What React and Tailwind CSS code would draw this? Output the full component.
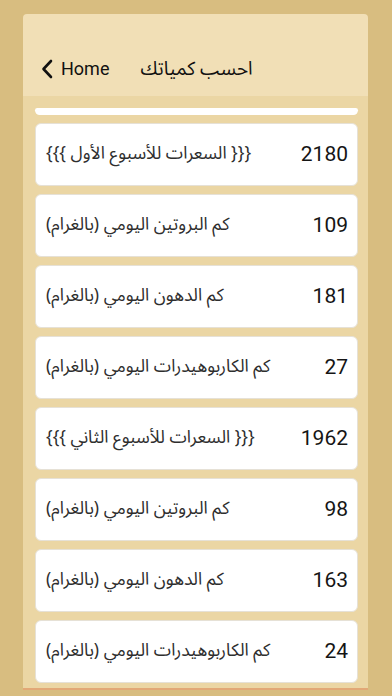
import React from 'react';

const rows = [
	{ value: '2180', label: '{{{ السعرات للأسبوع الأول }}}' },
	{ value: '109', label: 'كم البروتين اليومي (بالغرام)' },
	{ value: '181', label: 'كم الدهون اليومي (بالغرام)' },
	{ value: '27', label: 'كم الكاربوهيدرات اليومي (بالغرام)' },
	{ value: '1962', label: '{{{ السعرات للأسبوع الثاني }}}' },
	{ value: '98', label: 'كم البروتين اليومي (بالغرام)' },
	{ value: '163', label: 'كم الدهون اليومي (بالغرام)' },
	{ value: '24', label: 'كم الكاربوهيدرات اليومي (بالغرام)' },
];

const arabic = { fontFamily: '"Noto Sans Arabic", "DejaVu Sans", sans-serif' };
const latin = { fontFamily: 'Roboto, "Liberation Sans", sans-serif' };

export default function App() {
	return (
		<div className="w-[392px] h-[696px] bg-[#d8bd80] pt-[14px] pl-[23px] overflow-hidden">
			<div className="w-[345px] h-[676px] flex flex-col rounded-t-[4px] overflow-hidden border-b-2 border-[#e2a877]">
				{/* header */}
				<div className="h-[82px] shrink-0 bg-[#f1dfb6] flex items-end pb-[17px] pl-[18px]">
					<div className="flex items-center gap-[8px]">
						<svg width="12" height="20" viewBox="0 0 12 20" className="shrink-0">
							<path
								d="M10 2 L2.5 10 L10 18"
								fill="none"
								stroke="#111"
								strokeWidth="2.6"
								strokeLinecap="round"
								strokeLinejoin="round"
							/>
						</svg>
						<span className="text-[18px] text-[#111] leading-none" style={latin}>
							Home
						</span>
					</div>
					<div
						dir="rtl"
						className="ml-[31px] text-[19px] text-[#111] leading-none"
						style={arabic}
					>
						احسب كمياتك
					</div>
				</div>

				{/* list */}
				<div className="flex-1 bg-[#ebd6a4] pt-[12px] pl-[12px] pr-[10px] flex flex-col gap-2 overflow-hidden">
					<div className="h-[7px] shrink-0 bg-white rounded-b-md rounded-t-[3px]" />
					{rows.map((row, i) => (
						<div
							key={i}
							className="h-[63px] shrink-0 bg-white rounded-md border border-[#e6e1d6] flex items-center justify-between pl-[10px] pr-[9px]"
						>
							<div dir="rtl" className="text-[17.5px] text-[#2e2e2e]" style={arabic}>
								{row.label}
							</div>
							<div className="text-[21px] text-[#151515]" style={latin}>
								{row.value}
							</div>
						</div>
					))}
				</div>
			</div>
		</div>
	);
}
